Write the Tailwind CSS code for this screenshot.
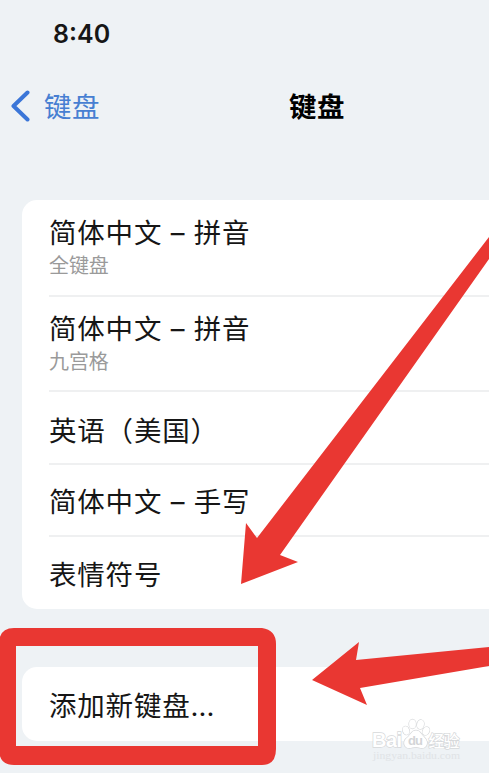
<!DOCTYPE html>
<html lang="zh-CN">
<head>
    <meta charset="UTF-8">
    <meta name="viewport" content="width=device-width, initial-scale=1.0">
    <title>键盘</title>
    <script src="https://cdn.jsdelivr.net/npm/@tailwindcss/browser@4"></script>
</head>
<body class="relative h-[773px] overflow-hidden bg-[#eef2f5] font-['Inter','Noto_Sans_CJK_SC',sans-serif] text-[#161616]">

    <!-- 状态栏 -->
    <div class="h-[70px] pt-[18px] pl-[53px] text-[25px] leading-8 font-semibold">8:40</div>

    <!-- 导航栏 -->
    <header class="flex h-[76px] items-center pl-[10px] text-[27.5px] tracking-[0.5px]">
        <a class="flex w-[279px] items-center text-[#477fd2]">
            <svg class="-mt-1 mr-[13px] h-8 w-[21px]" viewBox="0 0 21 32" fill="none" stroke="#3b76d8" stroke-width="4" stroke-linecap="round" stroke-linejoin="round">
                <path d="M17.5 2.5L3.5 16L17.5 29.5"/>
            </svg>
            <span>键盘</span>
        </a>
        <h1 class="font-bold text-black">键盘</h1>
    </header>

    <main class="mt-[54px] flex flex-col gap-[58px] pl-[22px] text-[27.5px] leading-9 tracking-[0.8px]">
        <!-- 已添加的键盘 -->
        <ul class="h-[409px] rounded-l-[15px] bg-white pl-[27px]">
            <li class="h-[97px] border-b-2 border-[#eff0f1] pt-[15px]">
                <p>简体中文 – 拼音</p>
                <p class="text-[20px] leading-[30px] tracking-[-0.1px] text-[#9a9a9a]">全键盘</p>
            </li>
            <li class="h-[95px] border-b-2 border-[#eff0f1] pt-[14px]">
                <p>简体中文 – 拼音</p>
                <p class="text-[20px] leading-[30px] tracking-[-0.1px] text-[#9a9a9a]">九宫格</p>
            </li>
            <li class="flex h-[73px] items-center border-b-2 border-[#eff0f1] pt-[3px] font-['Noto_Sans_CJK_SC',sans-serif]">英语（美国）</li>
            <li class="flex h-[72px] items-center border-b-2 border-[#eff0f1] pt-[3px]">简体中文 – 手写</li>
            <li class="flex h-[72px] items-center pt-[3px]">表情符号</li>
        </ul>

        <div class="flex h-[74px] items-center rounded-l-[15px] bg-white pt-1 pl-[27px]">添加新键盘<span class="tracking-[0.1px]">...</span></div>
    </main>

    <!-- 红框和箭头 -->
    <svg class="absolute top-0 left-0" width="489" height="773" viewBox="0 0 489 773" fill="#e93732">
        <path fill-rule="evenodd" d="M14 628H262Q276 630 276 644V749Q276 765 262 765H14Q-1 765 -1 749V644Q-1 628 14 628ZM16 646V746H258V646Z"/>
        <path d="M489 237L257 538L246 523L241 584L298 562L280 555L489 259Z"/>
        <path d="M489 647L356 660L359 642L312 680L367 705L360 688L489 666Z"/>
    </svg>

    <!-- 水印 -->
    <div class="absolute top-[718px] left-[371px] h-12 w-[92px]">
        <svg class="absolute top-0 left-0" width="92" height="48" viewBox="0 0 92 48" fill="#fff" stroke="#d6d8da" stroke-width="1.4" paint-order="stroke">
            <text x="1" y="29" font-family="Liberation Sans" font-size="20" font-weight="700" textLength="30">Bai</text>
            <ellipse cx="35" cy="12.5" rx="3.2" ry="4.2" transform="rotate(-20 35 12.5)"/>
            <ellipse cx="41.5" cy="6" rx="3.4" ry="4.5"/>
            <ellipse cx="49.5" cy="6.5" rx="3.4" ry="4.5" transform="rotate(12 49.5 6.5)"/>
            <ellipse cx="55" cy="13" rx="3.2" ry="4.2" transform="rotate(28 55 13)"/>
            <path d="M45 12.5C49 12.5 50 16 53 19C56 22 57 25 55 28C52 32 48 29 45 29C41 29 37 32 34 28C32 24 34 21 37 19C40 16 41 12.5 45 12.5Z"/>
            <text x="37" y="27" font-family="Liberation Sans" font-size="13" font-weight="700" textLength="15" fill="#d3d5d7" stroke="none">du</text>
            <text x="57.5" y="29" font-family="Noto Sans CJK SC" font-size="16" font-weight="500" textLength="31">经验</text>
            <text x="2" y="41" font-family="Liberation Serif" font-size="10" textLength="87" lengthAdjust="spacingAndGlyphs" fill="#e0e3e6" stroke="none">jingyan.baidu.com</text>
        </svg>
    </div>

</body>
</html>
